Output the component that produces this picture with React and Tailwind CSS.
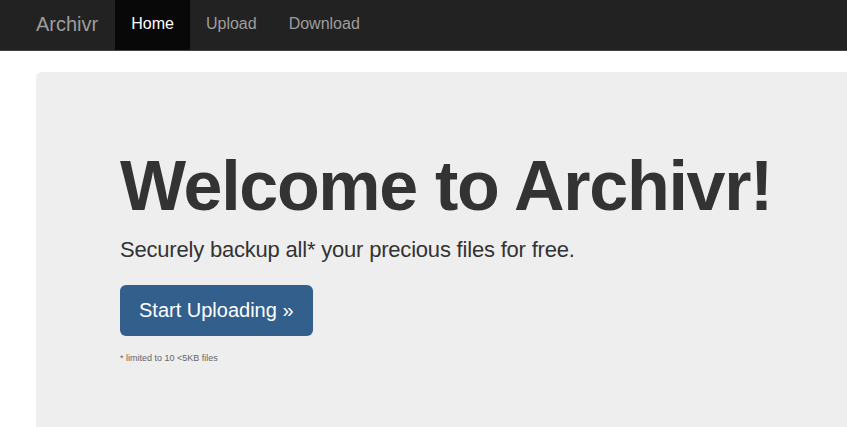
import React from "react";

const links = ["Home", "Upload", "Download"];

function App() {
  return (
    <div className="min-h-screen w-[847px] overflow-hidden bg-white font-['Liberation_Sans',Arial,sans-serif]">
      <nav className="flex h-[51px] items-stretch border-b border-[#444] bg-[#222]">
        <div className="flex items-center pb-[2px] pl-[36px] pr-[17px] text-[20px] text-[#9d9d9d]">
          Archivr
        </div>
        <ul className="flex items-stretch">
          {links.map((l, i) => (
            <li
              key={l}
              className={
                i === 0
                  ? "flex items-center bg-[#080808] px-[16px] pb-[2px] text-[16px] text-white"
                  : "flex items-center px-[16px] pb-[2px] text-[16px] text-[#9d9d9d]"
              }
            >
              {l}
            </li>
          ))}
        </ul>
      </nav>

      <div className="ml-[36px] mt-[21px] w-[900px] rounded-[6px] bg-[#eeeeee] pb-[80px] pl-[84px] pt-[76px]">
        <h1 className="text-[70px] font-bold leading-[1.1] tracking-[-1.3px] text-[#333]">
          Welcome to Archivr!
        </h1>
        <p className="mt-[10px] text-[22px] leading-[1.4] font-light tracking-[-0.2px] text-[#333]">
          Securely backup all* your precious files for free.
        </p>
        <button className="mt-[19px] flex h-[51px] items-center rounded-[6px] bg-[#335f8d] px-[19px] text-[20px] text-white">
          Start Uploading »
        </button>
        <p className="mt-[16px] text-[9px] leading-[12px] text-[#666]">* limited to 10 &lt;5KB files</p>
      </div>
    </div>
  );
}

export default App;
